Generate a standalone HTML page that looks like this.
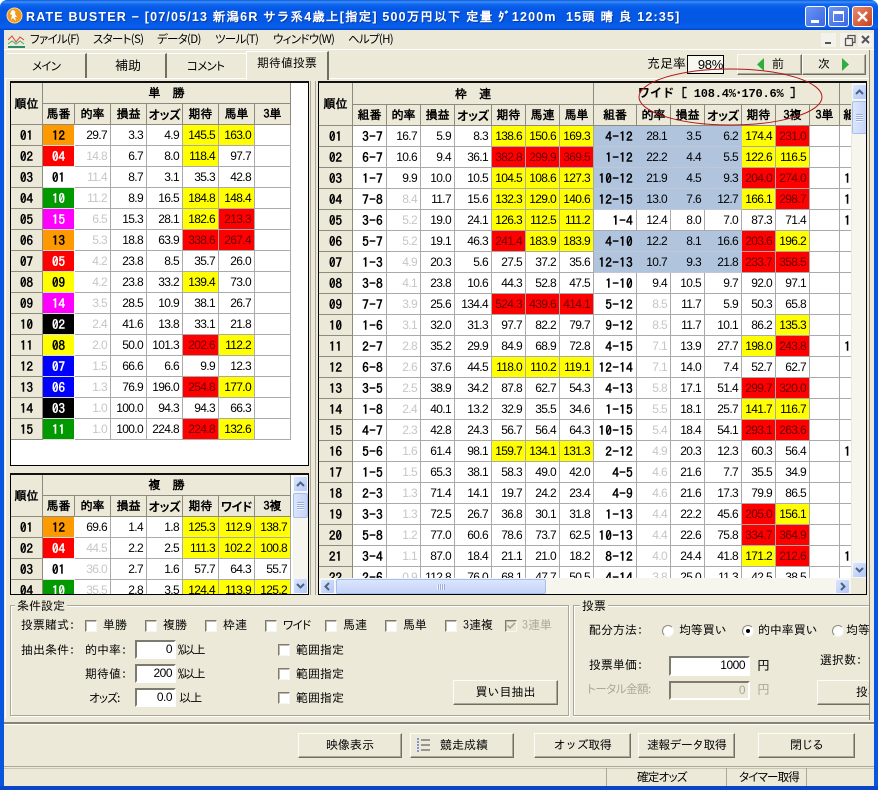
<!DOCTYPE html>
<html lang="ja"><head><meta charset="utf-8"><title>RATE BUSTER</title>
<style>
html,body{margin:0;padding:0;background:#fff}
#w{position:relative;width:878px;height:790px;overflow:hidden;background:#ece9d8;font:12px/12px "IPAGothic","Noto Sans CJK JP",sans-serif;color:#000;border-radius:7px 7px 0 0}
.a,.t,.btn,.in,.cb,.rd{position:absolute;box-sizing:border-box}
.t{white-space:nowrap;line-height:12px}
.k{font-family:"Noto Sans CJK JP",sans-serif;font-feature-settings:"palt";letter-spacing:-.7px;line-height:14px;font-size:11.5px}
.btn{background:#ece9d8;border:1px solid;border-color:#fdfcf8 #716f64 #716f64 #fdfcf8;box-shadow:inset -1px -1px 0 #aca899;text-align:center;font-size:12px;line-height:22px;white-space:nowrap;overflow:hidden}
.in{background:#fff;border:2px solid;border-color:#7d7b6e #fff #fff #7d7b6e;text-align:right;padding-right:2px;font:12px/14px "Liberation Sans",sans-serif;letter-spacing:-.5px}
.in.d{background:#ece9d8;color:#aca899}
.cb{width:12px;height:12px;background:#fff;border:1px solid;border-color:#7d7b6e #f6f5ef #f6f5ef #7d7b6e;box-shadow:inset 1px 1px 0 #bdbaa8}
.rd{width:12px;height:12px;background:#fff;border-radius:50%;border:1px solid;border-color:#8d8b7e #f6f5ef #f6f5ef #8d8b7e}
.box{position:absolute;box-sizing:border-box;background:#fff;border:1px solid #000;border-top:2px solid #111;overflow:hidden}
table{border-collapse:separate;border-spacing:0;table-layout:fixed;position:absolute;left:0;top:0}
td,th{box-sizing:border-box;height:21px;padding:0;overflow:hidden;white-space:nowrap}
td{border-right:1px solid #aaa;border-bottom:1px solid #aaa;text-align:right;padding-right:3px;font:12px/19px "Liberation Sans",sans-serif;letter-spacing:-.65px;background:#fff}
th{background:#ece9d8;border-right:1px solid #8d8b7e;border-bottom:1px solid #8d8b7e;font:bold 13px/18px "IPAGothic",monospace;padding-top:2px}
th.h{font:bold 12px/19px "IPAGothic",sans-serif;padding-top:1px}
th.q{font:bold 12px/19px "Noto Sans CJK JP",sans-serif;font-feature-settings:"palt";letter-spacing:-.4px;padding-top:0}
td.y{background:#ff0}
td.r{background:#f00;color:#600}
td.g{color:#c6c6c6}
td.b{background:#b0c4de;border-right-color:#b0c4de;border-bottom-color:#c2c8d2}
td.c{font:bold 13px/19px "IPAGothic",monospace;letter-spacing:.4px}
td.n{text-align:center;padding:0;font:bold 13px/19px "IPAGothic",monospace;letter-spacing:0;border-right:1px solid #fff;border-bottom:1px solid #ddd}
.o{background:#f90!important}.e{background:#f00!important;color:#fff}.w{background:#fff!important}.v{background:#090!important;color:#fff}.m{background:#f0f!important;color:#fff}.l{background:#ff0!important}.u{background:#00f!important;color:#fff}.z{background:#000!important;color:#fff}
.sb{position:absolute;box-sizing:border-box;border:1px solid #f4f6fc;border-radius:2px;background:linear-gradient(135deg,#dbe6fd,#b2c7f4)}
.sb svg{position:absolute;left:0;top:0}
.th{position:absolute;box-sizing:border-box;border:1px solid #a7bdec;border-radius:2px;background:linear-gradient(90deg,#dbe5fc,#c5d4f8)}
.grip{position:absolute;background:repeating-linear-gradient(0deg,#eef3fe 0 1px,#98aee0 1px 2px)}
.griph{position:absolute;background:repeating-linear-gradient(90deg,#eef3fe 0 1px,#98aee0 1px 2px)}
</style></head><body><div id="w">

<div class="a" style="left:0;top:0;width:878px;height:30px;background:linear-gradient(180deg,#0a57d8 0,#3d8ffa 2px,#1268ee 4px,#0458e6 9px,#0358e4 22px,#0a60ee 27px,#0047c8 30px)"></div>
<div class="a" style="left:0;top:30px;width:4px;height:760px;background:#0a55dd"></div>
<div class="a" style="left:874px;top:30px;width:4px;height:760px;background:#0a55dd"></div>
<div class="a" style="left:0;top:786px;width:878px;height:4px;background:#0a45c8"></div>

<svg class="a" style="left:6px;top:7px" width="17" height="17" viewBox="0 0 17 17"><circle cx="8.500" cy="8.500" r="7.500" fill="#f09a20" stroke="#ffd890"/><path d="M6 3c3 0 4 2 3 4l2 3-2 0 1 4-3-3-2 2 1-5-2-1 2-4z" fill="#fff"/></svg>
<div class="t" style="left:26px;top:10px;color:#fff;font:bold 12.5px/14px 'Liberation Sans','IPAGothic',sans-serif;letter-spacing:1.18px;text-shadow:1px 1px 0 #0a3ba8">RATE BUSTER − [07/05/13 新潟6R サラ系4歳上[指定] 500万円以下 定量 ﾀﾞ1200m&nbsp; 15頭 晴 良 12:35]</div>

<div class="a" style="left:805px;top:6px;width:21px;height:21px;border:1px solid #fff;box-sizing:border-box;border-radius:3px;background:linear-gradient(135deg,#6a95f4,#3a66e4)"><div class="a" style="left:5px;top:13px;width:8px;height:3px;background:#fff"></div></div>
<div class="a" style="left:828px;top:6px;width:21px;height:21px;border:1px solid #fff;box-sizing:border-box;border-radius:3px;background:linear-gradient(135deg,#6a95f4,#3a66e4)"><div class="a" style="left:4px;top:4px;width:11px;height:11px;box-sizing:border-box;border:1px solid #fff;border-top-width:3px"></div></div>
<div class="a" style="left:852px;top:6px;width:21px;height:21px;border:1px solid #fff;box-sizing:border-box;border-radius:3px;background:linear-gradient(135deg,#e88a70,#c8401c)"><svg class="a" style="left:0;top:0" width="19" height="19"><path d="M5 5l9 9M14 5l-9 9" stroke="#fff" stroke-width="2.400"/></svg></div>

<svg class="a" style="left:8px;top:33px" width="17" height="15" viewBox="0 0 17 15"><path d="M0 13h17v2H0z" fill="#2a8a6a"/><path d="M0 7l4-4 4 6 4-5 4 3" fill="none" stroke="#e04040"/><path d="M0 11l4-3 4 3 4-3 4 3" fill="none" stroke="#40b060"/></svg>
<div class="t k" style="left:30px;top:32px">ファイル(F)</div>
<div class="t k" style="left:93px;top:32px">スタート(S)</div>
<div class="t k" style="left:157px;top:32px">データ(D)</div>
<div class="t k" style="left:215px;top:32px">ツール(T)</div>
<div class="t k" style="left:273px;top:32px">ウィンドウ(W)</div>
<div class="t k" style="left:348px;top:32px">ヘルプ(H)</div>
<svg class="a" style="left:820px;top:32px" width="54" height="16"><path d="M1 1h15v14H1zM20 1h15v14H20zM38 1h15v14H38z" fill="#f3f2ec"/><path d="M5 11h6" stroke="#555" stroke-width="2"/><path d="M25.500 6.500h7v7h-7zM28 6V3.500h7v7h-2" fill="none" stroke="#555" stroke-width="1.300"/><path d="M42 4l7 7M49 4l-7 7" stroke="#555" stroke-width="2"/></svg>
<div class="a" style="left:4px;top:49px;width:870px;height:1px;background:#fff"></div>

<div class="a" style="left:5px;top:78px;width:864px;height:1px;background:#fff"></div>
<div class="a" style="left:5px;top:78px;width:1px;height:640px;background:#fff"></div>
<div class="a" style="left:869px;top:50px;width:1px;height:670px;background:#8d8b7e"></div>
<div class="a" style="left:7px;top:53px;width:80px;height:25px;border-right:2px solid #716f64;border-top:1px solid #fff;box-sizing:border-box"></div>
<div class="a" style="left:87px;top:53px;width:80px;height:25px;border-right:2px solid #716f64;border-top:1px solid #fff;box-sizing:border-box"></div>
<div class="a" style="left:167px;top:53px;width:80px;height:25px;border-top:1px solid #fff;box-sizing:border-box"></div>
<div class="a" style="left:246px;top:51px;width:83px;height:29px;background:#ece9d8;border-right:2px solid #716f64;border-left:1px solid #fff;border-top:1px solid #fff;box-sizing:border-box"></div>
<div class="t k" style="left:32px;top:59px">メイン</div>
<div class="t" style="left:115px;top:60px;font-size:13px">補助</div>
<div class="t k" style="left:187px;top:59px">コメント</div>
<div class="t" style="left:257px;top:57px;font-size:12px">期待値投票</div>

<div class="t" style="left:647px;top:58px;font-size:13px">充足率</div>
<div class="a" style="left:687px;top:55px;width:37px;height:19px;border:1px solid #000;box-sizing:border-box;background:#f8f7f0;text-align:right;font:13px/17px 'Liberation Sans',sans-serif;letter-spacing:-.3px">98%</div>
<div class="btn" style="left:737px;top:54px;width:65px;height:21px;line-height:19px"><svg class="a" style="left:19px;top:3px" width="8" height="13"><path d="M7 0v13L0 6.500z" fill="#2eae3e"/></svg><span class="a" style="left:34px;top:0">前</span></div>
<div class="btn" style="left:802px;top:54px;width:64px;height:21px;line-height:19px"><span class="a" style="left:15px;top:0">次</span><svg class="a" style="left:39px;top:3px" width="8" height="13"><path d="M0 0v13l7-6.500z" fill="#2eae3e"/></svg></div>

<div class="a" style="left:310px;top:81px;width:1px;height:514px;background:#aca899"></div>
<div class="a" style="left:315px;top:81px;width:1px;height:514px;background:#aca899"></div>

<div class="box" style="left:10px;top:81px;width:299px;height:385px">
<table style="width:280px"><colgroup><col width="32"><col width="32"><col width="36"><col width="36"><col width="36"><col width="36"><col width="36"><col width="36"></colgroup>
<tr><th rowspan="2" class="h">順位</th><th colspan="7" class="h">単　勝</th></tr>
<tr><th class="h">馬番</th><th class="h">的率</th><th class="h">損益</th><th class="q">オッズ</th><th class="h">期待</th><th class="h">馬単</th><th class="h">3単</th></tr>
<tr><th>01</th><td class="n o">12</td><td>29.7</td><td>3.3</td><td>4.9</td><td class="y">145.5</td><td class="y">163.0</td><td></td></tr>
<tr><th>02</th><td class="n e">04</td><td class="g">14.8</td><td>6.7</td><td>8.0</td><td class="y">118.4</td><td>97.7</td><td></td></tr>
<tr><th>03</th><td class="n w">01</td><td class="g">11.4</td><td>8.7</td><td>3.1</td><td>35.3</td><td>42.8</td><td></td></tr>
<tr><th>04</th><td class="n v">10</td><td class="g">11.2</td><td>8.9</td><td>16.5</td><td class="y">184.8</td><td class="y">148.4</td><td></td></tr>
<tr><th>05</th><td class="n m">15</td><td class="g">6.5</td><td>15.3</td><td>28.1</td><td class="y">182.6</td><td class="r">213.3</td><td></td></tr>
<tr><th>06</th><td class="n o">13</td><td class="g">5.3</td><td>18.8</td><td>63.9</td><td class="r">338.6</td><td class="r">267.4</td><td></td></tr>
<tr><th>07</th><td class="n e">05</td><td class="g">4.2</td><td>23.8</td><td>8.5</td><td>35.7</td><td>26.0</td><td></td></tr>
<tr><th>08</th><td class="n l">09</td><td class="g">4.2</td><td>23.8</td><td>33.2</td><td class="y">139.4</td><td>73.0</td><td></td></tr>
<tr><th>09</th><td class="n m">14</td><td class="g">3.5</td><td>28.5</td><td>10.9</td><td>38.1</td><td>26.7</td><td></td></tr>
<tr><th>10</th><td class="n z">02</td><td class="g">2.4</td><td>41.6</td><td>13.8</td><td>33.1</td><td>21.8</td><td></td></tr>
<tr><th>11</th><td class="n l">08</td><td class="g">2.0</td><td>50.0</td><td>101.3</td><td class="r">202.6</td><td class="y">112.2</td><td></td></tr>
<tr><th>12</th><td class="n u">07</td><td class="g">1.5</td><td>66.6</td><td>6.6</td><td>9.9</td><td>12.3</td><td></td></tr>
<tr><th>13</th><td class="n u">06</td><td class="g">1.3</td><td>76.9</td><td>196.0</td><td class="r">254.8</td><td class="y">177.0</td><td></td></tr>
<tr><th>14</th><td class="n z">03</td><td class="g">1.0</td><td>100.0</td><td>94.3</td><td>94.3</td><td>66.3</td><td></td></tr>
<tr><th>15</th><td class="n v">11</td><td class="g">1.0</td><td>100.0</td><td>224.8</td><td class="r">224.8</td><td class="y">132.6</td><td></td></tr>
</table></div>

<div class="box" style="left:10px;top:473px;width:299px;height:122px">
<table style="width:280px"><colgroup><col width="32"><col width="32"><col width="36"><col width="36"><col width="36"><col width="36"><col width="36"><col width="36"></colgroup>
<tr><th rowspan="2" class="h">順位</th><th colspan="7" class="h">複　勝</th></tr>
<tr><th class="h">馬番</th><th class="h">的率</th><th class="h">損益</th><th class="q">オッズ</th><th class="h">期待</th><th class="q">ワイド</th><th class="h">3複</th></tr>
<tr><th>01</th><td class="n o">12</td><td>69.6</td><td>1.4</td><td>1.8</td><td class="y">125.3</td><td class="y">112.9</td><td class="y">138.7</td></tr>
<tr><th>02</th><td class="n e">04</td><td class="g">44.5</td><td>2.2</td><td>2.5</td><td class="y">111.3</td><td class="y">102.2</td><td class="y">100.8</td></tr>
<tr><th>03</th><td class="n w">01</td><td class="g">36.0</td><td>2.7</td><td>1.6</td><td>57.7</td><td>64.3</td><td>55.7</td></tr>
<tr><th>04</th><td class="n v">10</td><td class="g">35.5</td><td>2.8</td><td>3.5</td><td class="y">124.4</td><td class="y">113.9</td><td class="y">125.2</td></tr>
</table>
<div class="a" style="left:282px;top:0;width:15px;height:119px;background:#f6f6ee"></div>
<div class="sb" style="left:282px;top:1px;width:15px;height:16px"><svg width="13" height="14"><path d="M3 9l3.500-3.500L10 9" fill="none" stroke="#4d6185" stroke-width="2"/></svg></div>
<div class="th" style="left:282px;top:18px;width:15px;height:25px"><div class="grip" style="left:3px;top:8px;width:7px;height:8px"></div></div>
<div class="sb" style="left:282px;top:103px;width:15px;height:16px"><svg width="13" height="14"><path d="M3 5l3.500 3.500L10 5" fill="none" stroke="#4d6185" stroke-width="2"/></svg></div>
</div>

<div class="box" style="left:318px;top:81px;width:549px;height:514px">
<table style="width:532px"><colgroup><col width="34"><col width="34"><col width="34"><col width="34"><col width="37"><col width="34"><col width="34"><col width="34"><col width="43"><col width="34"><col width="34"><col width="37"><col width="34"><col width="34"><col width="30"><col width="22"></colgroup>
<tr><th rowspan="2" class="h">順位</th><th colspan="7" class="h">枠　連</th><th colspan="7" class="h" style="letter-spacing:.2px"><span style="display:inline-block;width:38px;font:bold 12px/14px 'Noto Sans CJK JP',sans-serif">ワイド</span> [ <span style="font-family:'Liberation Mono',monospace;letter-spacing:-.2px">108.4%･170.6%</span> ]</th><th class="h"></th></tr>
<tr><th class="h">組番</th><th class="h">的率</th><th class="h">損益</th><th class="q">オッズ</th><th class="h">期待</th><th class="h">馬連</th><th class="h">馬単</th><th class="h">組番</th><th class="h">的率</th><th class="h">損益</th><th class="q">オッズ</th><th class="h">期待</th><th class="h">3複</th><th class="h">3単</th><th class="h" style="text-align:left;padding-left:3px">組</th></tr>
<tr><th>01</th><td class="c">3-7</td><td>16.7</td><td>5.9</td><td>8.3</td><td class="y">138.6</td><td class="y">150.6</td><td class="y">169.3</td><td class="c b">4-12</td><td class="b">28.1</td><td class="b">3.5</td><td class="b">6.2</td><td class="y">174.4</td><td class="r">231.0</td><td></td><td></td></tr>
<tr><th>02</th><td class="c">6-7</td><td>10.6</td><td>9.4</td><td>36.1</td><td class="r">382.8</td><td class="r">299.9</td><td class="r">369.5</td><td class="c b">1-12</td><td class="b">22.2</td><td class="b">4.4</td><td class="b">5.5</td><td class="y">122.6</td><td class="y">116.5</td><td></td><td></td></tr>
<tr><th>03</th><td class="c">1-7</td><td>9.9</td><td>10.0</td><td>10.5</td><td class="y">104.5</td><td class="y">108.6</td><td class="y">127.3</td><td class="c b">10-12</td><td class="b">21.9</td><td class="b">4.5</td><td class="b">9.3</td><td class="r">204.0</td><td class="r">274.0</td><td></td><td class="c" style="text-align:left;padding-left:4px">1</td></tr>
<tr><th>04</th><td class="c">7-8</td><td class="g">8.4</td><td>11.7</td><td>15.6</td><td class="y">132.3</td><td class="y">129.0</td><td class="y">140.6</td><td class="c b">12-15</td><td class="b">13.0</td><td class="b">7.6</td><td class="b">12.7</td><td class="y">166.1</td><td class="r">298.7</td><td></td><td class="c" style="text-align:left;padding-left:4px">1</td></tr>
<tr><th>05</th><td class="c">3-6</td><td class="g">5.2</td><td>19.0</td><td>24.1</td><td class="y">126.3</td><td class="y">112.5</td><td class="y">111.2</td><td class="c">1-4</td><td>12.4</td><td>8.0</td><td>7.0</td><td>87.3</td><td>71.4</td><td></td><td class="c" style="text-align:left;padding-left:4px">1</td></tr>
<tr><th>06</th><td class="c">5-7</td><td class="g">5.2</td><td>19.1</td><td>46.3</td><td class="r">241.4</td><td class="y">183.9</td><td class="y">183.9</td><td class="c b">4-10</td><td class="b">12.2</td><td class="b">8.1</td><td class="b">16.6</td><td class="r">203.6</td><td class="y">196.2</td><td></td><td></td></tr>
<tr><th>07</th><td class="c">1-3</td><td class="g">4.9</td><td>20.3</td><td>5.6</td><td>27.5</td><td>37.2</td><td>35.6</td><td class="c b">12-13</td><td class="b">10.7</td><td class="b">9.3</td><td class="b">21.8</td><td class="r">233.7</td><td class="r">358.5</td><td></td><td></td></tr>
<tr><th>08</th><td class="c">3-8</td><td class="g">4.1</td><td>23.8</td><td>10.6</td><td>44.3</td><td>52.8</td><td>47.5</td><td class="c">1-10</td><td>9.4</td><td>10.5</td><td>9.7</td><td>92.0</td><td>97.1</td><td></td><td></td></tr>
<tr><th>09</th><td class="c">7-7</td><td class="g">3.9</td><td>25.6</td><td>134.4</td><td class="r">524.3</td><td class="r">439.6</td><td class="r">414.1</td><td class="c">5-12</td><td class="g">8.5</td><td>11.7</td><td>5.9</td><td>50.3</td><td>65.8</td><td></td><td></td></tr>
<tr><th>10</th><td class="c">1-6</td><td class="g">3.1</td><td>32.0</td><td>31.3</td><td>97.7</td><td>82.2</td><td>79.7</td><td class="c">9-12</td><td class="g">8.5</td><td>11.7</td><td>10.1</td><td>86.2</td><td class="y">135.3</td><td></td><td></td></tr>
<tr><th>11</th><td class="c">2-7</td><td class="g">2.8</td><td>35.2</td><td>29.9</td><td>84.9</td><td>68.9</td><td>72.8</td><td class="c">4-15</td><td class="g">7.1</td><td>13.9</td><td>27.7</td><td class="y">198.0</td><td class="r">243.8</td><td></td><td class="c" style="text-align:left;padding-left:4px">1</td></tr>
<tr><th>12</th><td class="c">6-8</td><td class="g">2.6</td><td>37.6</td><td>44.5</td><td class="y">118.0</td><td class="y">110.2</td><td class="y">119.1</td><td class="c">12-14</td><td class="g">7.1</td><td>14.0</td><td>7.4</td><td>52.7</td><td>62.7</td><td></td><td></td></tr>
<tr><th>13</th><td class="c">3-5</td><td class="g">2.5</td><td>38.9</td><td>34.2</td><td>87.8</td><td>62.7</td><td>54.3</td><td class="c">4-13</td><td class="g">5.8</td><td>17.1</td><td>51.4</td><td class="r">299.7</td><td class="r">320.0</td><td></td><td></td></tr>
<tr><th>14</th><td class="c">1-8</td><td class="g">2.4</td><td>40.1</td><td>13.2</td><td>32.9</td><td>35.5</td><td>34.6</td><td class="c">1-15</td><td class="g">5.5</td><td>18.1</td><td>25.7</td><td class="y">141.7</td><td class="y">116.7</td><td></td><td></td></tr>
<tr><th>15</th><td class="c">4-7</td><td class="g">2.3</td><td>42.8</td><td>24.3</td><td>56.7</td><td>56.4</td><td>64.3</td><td class="c">10-15</td><td class="g">5.4</td><td>18.4</td><td>54.1</td><td class="r">293.1</td><td class="r">263.6</td><td></td><td></td></tr>
<tr><th>16</th><td class="c">5-6</td><td class="g">1.6</td><td>61.4</td><td>98.1</td><td class="y">159.7</td><td class="y">134.1</td><td class="y">131.3</td><td class="c">2-12</td><td class="g">4.9</td><td>20.3</td><td>12.3</td><td>60.3</td><td>56.4</td><td></td><td class="c" style="text-align:left;padding-left:4px">1</td></tr>
<tr><th>17</th><td class="c">1-5</td><td class="g">1.5</td><td>65.3</td><td>38.1</td><td>58.3</td><td>49.0</td><td>42.0</td><td class="c">4-5</td><td class="g">4.6</td><td>21.6</td><td>7.7</td><td>35.5</td><td>34.9</td><td></td><td></td></tr>
<tr><th>18</th><td class="c">2-3</td><td class="g">1.3</td><td>71.4</td><td>14.1</td><td>19.7</td><td>24.2</td><td>23.4</td><td class="c">4-9</td><td class="g">4.6</td><td>21.6</td><td>17.3</td><td>79.9</td><td>86.5</td><td></td><td></td></tr>
<tr><th>19</th><td class="c">3-3</td><td class="g">1.3</td><td>72.5</td><td>26.7</td><td>36.8</td><td>30.1</td><td>31.8</td><td class="c">1-13</td><td class="g">4.4</td><td>22.2</td><td>45.6</td><td class="r">205.0</td><td class="y">156.1</td><td></td><td></td></tr>
<tr><th>20</th><td class="c">5-8</td><td class="g">1.2</td><td>77.0</td><td>60.6</td><td>78.6</td><td>73.7</td><td>62.5</td><td class="c">10-13</td><td class="g">4.4</td><td>22.6</td><td>75.8</td><td class="r">334.7</td><td class="r">364.9</td><td></td><td></td></tr>
<tr><th>21</th><td class="c">3-4</td><td class="g">1.1</td><td>87.0</td><td>18.4</td><td>21.1</td><td>21.0</td><td>18.2</td><td class="c">8-12</td><td class="g">4.0</td><td>24.4</td><td>41.8</td><td class="y">171.2</td><td class="r">212.6</td><td></td><td class="c" style="text-align:left;padding-left:4px">1</td></tr>
<tr><th>22</th><td class="c">2-6</td><td class="g">0.9</td><td>112.8</td><td>76.0</td><td>68.1</td><td>47.7</td><td>50.5</td><td class="c">4-14</td><td class="g">3.8</td><td>25.0</td><td>11.3</td><td>42.5</td><td>38.5</td><td></td><td></td></tr>
</table>
<div class="a" style="left:532px;top:0;width:15px;height:512px;background:#ece9d8"></div>
<div class="a" style="left:533px;top:0;width:15px;height:495px;background:#f6f6ee"></div>
<div class="sb" style="left:533px;top:1px;width:15px;height:16px"><svg width="13" height="14"><path d="M3 9l3.500-3.500L10 9" fill="none" stroke="#4d6185" stroke-width="2"/></svg></div>
<div class="th" style="left:533px;top:18px;width:15px;height:33px"><div class="grip" style="left:3px;top:12px;width:7px;height:8px"></div></div>
<div class="sb" style="left:533px;top:479px;width:15px;height:16px"><svg width="13" height="14"><path d="M3 5l3.500 3.500L10 5" fill="none" stroke="#4d6185" stroke-width="2"/></svg></div>
<div class="a" style="left:0;top:495px;width:532px;height:17px;background:#f6f6ee"></div>
<div class="sb" style="left:1px;top:496px;width:15px;height:15px"><svg width="13" height="13"><path d="M8 3L4.500 6.500 8 10" fill="none" stroke="#4d6185" stroke-width="2"/></svg></div>
<div class="th" style="left:17px;top:496px;width:210px;height:15px;background:linear-gradient(180deg,#dbe5fc,#c5d4f8)"><div class="griph" style="left:100px;top:4px;width:8px;height:6px"></div></div>
<div class="sb" style="left:516px;top:496px;width:15px;height:15px"><svg width="13" height="13"><path d="M5 3l3.500 3.500L5 10" fill="none" stroke="#4d6185" stroke-width="2"/></svg></div>
</div>

<svg class="a" style="left:630px;top:62px" width="200" height="70"><ellipse cx="100.500" cy="35" rx="91.500" ry="28" fill="none" stroke="#b01818" stroke-width="1"/></svg>

<div class="a" style="left:10px;top:605px;width:559px;height:111px;border:1px solid #aca899;box-sizing:border-box;box-shadow:inset 1px 1px 0 #fff,1px 1px 0 #fff"></div>
<div class="t" style="left:15px;top:600px;background:#ece9d8;padding:0 2px;font-size:12px">条件設定</div>
<div class="t" style="left:21px;top:619px">投票賭式:</div>
<div class="cb" style="left:85px;top:620px"></div><div class="t" style="left:103px;top:619px">単勝</div>
<div class="cb" style="left:145px;top:620px"></div><div class="t" style="left:163px;top:619px">複勝</div>
<div class="cb" style="left:205px;top:620px"></div><div class="t" style="left:223px;top:619px">枠連</div>
<div class="cb" style="left:265px;top:620px"></div><div class="t k" style="left:283px;top:618px">ワイド</div>
<div class="cb" style="left:325px;top:620px"></div><div class="t" style="left:343px;top:619px">馬連</div>
<div class="cb" style="left:385px;top:620px"></div><div class="t" style="left:403px;top:619px">馬単</div>
<div class="cb" style="left:445px;top:620px"></div><div class="t" style="left:463px;top:619px">3連複</div>
<div class="cb" style="left:505px;top:620px;background:#ece9d8"><svg class="a" style="left:0;top:0" width="10" height="10"><path d="M1.500 4.500l2.500 2.500 5-5" fill="none" stroke="#aca899" stroke-width="1.600"/></svg></div><div class="t" style="left:522px;top:619px;color:#aca899">3連単</div>

<div class="t" style="left:21px;top:644px">抽出条件:</div>
<div class="t" style="left:85px;top:644px">的中率:</div>
<div class="t" style="left:85px;top:668px">期待値:</div>
<div class="t k" style="left:89px;top:691px">オッズ:</div>
<div class="in" style="left:135px;top:640px;width:41px;height:19px">0</div>
<div class="in" style="left:135px;top:664px;width:41px;height:19px">200</div>
<div class="in" style="left:135px;top:688px;width:41px;height:19px">0.0</div>
<div class="t" style="left:178px;top:644px;letter-spacing:-1.2px">%以上</div>
<div class="t" style="left:178px;top:668px;letter-spacing:-1.2px">%以上</div>
<div class="t" style="left:179px;top:692px;letter-spacing:-.6px">以上</div>
<div class="cb" style="left:278px;top:644px"></div><div class="t" style="left:296px;top:644px">範囲指定</div>
<div class="cb" style="left:278px;top:668px"></div><div class="t" style="left:296px;top:668px">範囲指定</div>
<div class="cb" style="left:278px;top:692px"></div><div class="t" style="left:296px;top:692px">範囲指定</div>
<div class="btn" style="left:453px;top:680px;width:105px;height:25px">買い目抽出</div>

<div class="a" style="left:573px;top:605px;width:296px;height:111px;border:1px solid #aca899;border-right:0;box-sizing:border-box;box-shadow:inset 1px 1px 0 #fff,0 1px 0 #fff"></div>
<div class="t" style="left:580px;top:600px;background:#ece9d8;padding:0 2px">投票</div>
<div class="t" style="left:589px;top:624px">配分方法:</div>
<div class="rd" style="left:662px;top:625px"></div><div class="t" style="left:679px;top:624px;letter-spacing:-.1px">均等買い</div>
<div class="rd" style="left:742px;top:625px"><div class="a" style="left:3px;top:3px;width:4px;height:4px;border-radius:50%;background:#000"></div></div><div class="t" style="left:758px;top:624px;letter-spacing:-.1px">的中率買い</div>
<div class="rd" style="left:832px;top:625px"></div>
<div class="a" style="left:846px;top:624px;width:23px;height:14px;overflow:hidden;white-space:nowrap">均等買い</div>
<div class="t" style="left:589px;top:659px">投票単価:</div>
<div class="in" style="left:669px;top:656px;width:81px;height:20px;font-size:12px;padding-right:3px">1000</div>
<div class="t" style="left:757px;top:660px;font-size:13px">円</div>
<div class="t" style="left:820px;top:654px">選択数:</div>
<div class="t k" style="left:587px;top:682px;color:#aca899;letter-spacing:-.5px">トータル金額:</div>
<div class="in d" style="left:669px;top:681px;width:81px;height:19px;padding-right:3px">0</div>
<div class="t" style="left:757px;top:684px;font-size:13px;color:#aca899">円</div>
<div class="a" style="left:817px;top:680px;width:52px;height:25px;overflow:hidden"><div class="btn" style="left:0;top:0;width:90px;height:25px;text-align:left;padding-left:38px">投票</div></div>

<div class="a" style="left:4px;top:722px;width:870px;height:2px;background:#85837a"></div>
<div class="a" style="left:4px;top:724px;width:870px;height:1px;background:#fff"></div>
<div class="btn" style="left:298px;top:733px;width:104px;height:25px">映像表示</div>
<div class="btn" style="left:410px;top:733px;width:104px;height:25px;padding-left:4px">競走成績<svg class="a" style="left:5px;top:4px" width="16" height="14"><path d="M5 2h9M5 7h9M5 12h9" stroke="#444"/><path d="M1 1h2M1 4h2M1 7h2M1 10h2M1 13h2" stroke="#5a7ed0" stroke-width="1.500"/></svg></div>
<div class="btn" style="left:534px;top:733px;width:97px;height:25px;letter-spacing:-.5px">オッズ取得</div>
<div class="btn" style="left:638px;top:733px;width:97px;height:25px;letter-spacing:-.7px">速報データ取得</div>
<div class="btn" style="left:758px;top:733px;width:97px;height:25px;letter-spacing:-1px">閉じる</div>

<div class="a" style="left:4px;top:766px;width:870px;height:1px;background:#aca899"></div>
<div class="a" style="left:4px;top:768px;width:870px;height:1px;background:#c8c5b2"></div>
<div class="a" style="left:606px;top:768px;width:1px;height:18px;background:#aca899"></div>
<div class="a" style="left:726px;top:768px;width:1px;height:18px;background:#aca899"></div>
<div class="a" style="left:806px;top:768px;width:1px;height:18px;background:#aca899"></div>
<div class="t k" style="left:637px;top:770px">確定オッズ</div>
<div class="t k" style="left:739px;top:770px;letter-spacing:-.8px">タイマー取得</div>
</div></body></html>
